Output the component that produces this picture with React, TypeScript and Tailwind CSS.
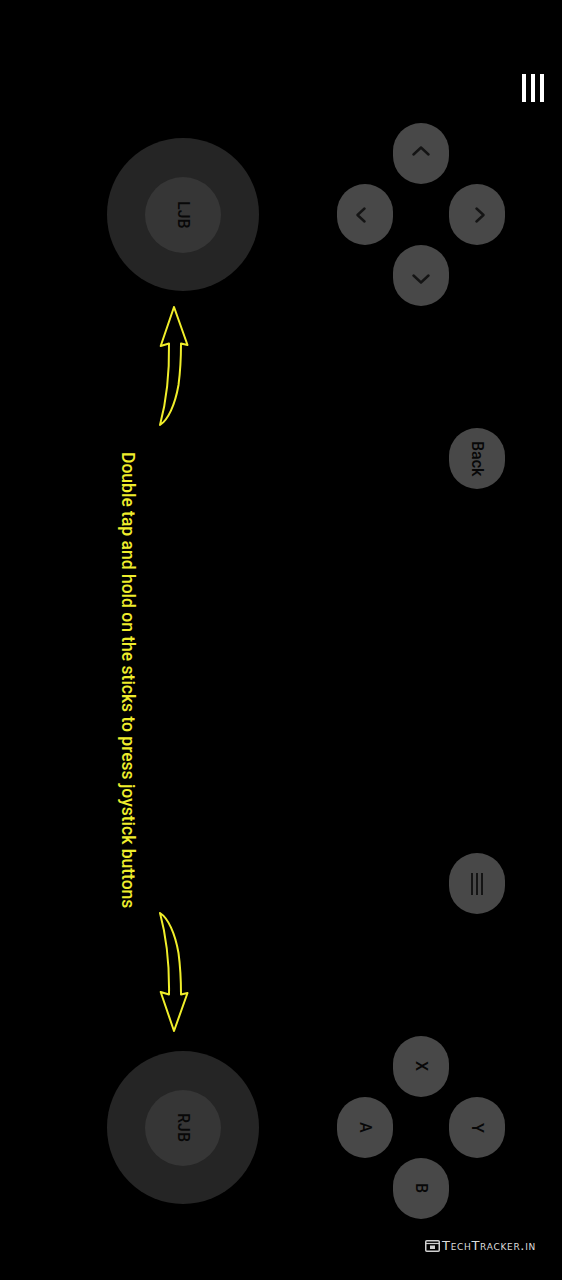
import React from "react";

const V = "[writing-mode:vertical-rl]";

function Btn({ children, className = "" }: { children?: React.ReactNode; className?: string }) {
  return (
    <div className={`w-[56px] h-[61px] rounded-full bg-[#484848] flex items-center justify-center text-[#080808] text-[16px] font-medium ${className}`}>
      {children}
    </div>
  );
}

function Chevron({ dir }: { dir: "up" | "down" | "left" | "right" }) {
  if (dir === "up" || dir === "down") {
    return (
      <svg width="18" height="10" viewBox="0 0 18 10" className={dir === "up" ? "-translate-y-[3px]" : "translate-y-[3px]"}>
        <polyline
          points={dir === "up" ? "1.5,8.5 9,1.5 16.5,8.5" : "1.5,1.5 9,8.5 16.5,1.5"}
          fill="none"
          stroke="#141414"
          strokeWidth="2.4"
          strokeLinecap="round"
          strokeLinejoin="round"
        />
      </svg>
    );
  }
  return (
    <svg width="10" height="16" viewBox="0 0 10 16" className={dir === "left" ? "-translate-x-[4px]" : "translate-x-[3px]"}>
      <polyline
        points={dir === "left" ? "8.5,1.5 1.5,8 8.5,14.5" : "1.5,1.5 8.5,8 1.5,14.5"}
        fill="none"
        stroke="#141414"
        strokeWidth="2.4"
        strokeLinecap="round"
        strokeLinejoin="round"
      />
    </svg>
  );
}

function Stick({ label }: { label: string }) {
  return (
    <div className="w-[152px] h-[153px] rounded-full bg-[#252525] flex items-center justify-center">
      <div className="w-[76px] h-[76px] rounded-full bg-[#363636] flex items-center justify-center">
        <span className={`${V} text-[16px] font-medium text-[#080808]`}>{label}</span>
      </div>
    </div>
  );
}

function Arrow({ flip = false }: { flip?: boolean }) {
  return (
    <svg
      width="34"
      height="124"
      viewBox="0 0 34 124"
      className={`ml-[50px] ${flip ? "-scale-y-100" : ""}`}
    >
      <path
        d="M17 3 L3.7 42 L12 39.5 C 12.5 70, 10 95, 3 121 C 11 116, 18 101, 21.5 81 C 23.5 66, 24 52, 24 39.5 L30.5 41 Z"
        fill="none"
        stroke="#f0ee2a"
        strokeWidth="2"
        strokeLinejoin="round"
      />
    </svg>
  );
}

export default function App() {
  return (
    <div className="relative w-[562px] h-[1280px] bg-black flex overflow-hidden font-['Roboto','Liberation_Sans',sans-serif]">
      {/* Left column: sticks, arrows, hint */}
      <div className="ml-[107px] w-[152px] flex flex-col pt-[138px]">
        <Stick label="LJB" />
        <div className="h-[760px] flex flex-col">
          <div className="mt-[13px]">
            <Arrow />
          </div>
          <div className="mt-[24px] ml-[10px] w-[22px]">
            <span className={`${V} text-[17.5px] leading-[22px] font-medium text-[#efed2c] whitespace-nowrap`}>
              Double tap and hold on the sticks to press joystick buttons
            </span>
          </div>
          <div className="-mt-[5px]">
            <Arrow flip />
          </div>
        </div>
        <Stick label="RJB" />
      </div>

      {/* Right column: dpad, back, menu, face buttons */}
      <div className="ml-[78px] w-[168px] flex flex-col pt-[123px]">
        <div className="grid grid-cols-[56px_56px_56px] grid-rows-[61px_61px_61px]">
          <div />
          <Btn><Chevron dir="up" /></Btn>
          <div />
          <Btn><Chevron dir="left" /></Btn>
          <div />
          <Btn><Chevron dir="right" /></Btn>
          <div />
          <Btn><Chevron dir="down" /></Btn>
          <div />
        </div>

        <Btn className="mt-[122px] ml-[112px]">
          <span className={V}>Back</span>
        </Btn>

        <Btn className="mt-[364px] ml-[112px]">
          <div className="flex gap-[3px]">
            <div className="w-[2px] h-[22px] bg-[#141414]" />
            <div className="w-[2px] h-[22px] bg-[#141414]" />
            <div className="w-[2px] h-[22px] bg-[#141414]" />
          </div>
        </Btn>

        <div className="mt-[122px] grid grid-cols-[56px_56px_56px] grid-rows-[61px_61px_61px]">
          <div />
          <Btn><span className={V}>X</span></Btn>
          <div />
          <Btn><span className={V}>A</span></Btn>
          <div />
          <Btn><span className={V}>Y</span></Btn>
          <div />
          <Btn><span className={V}>B</span></Btn>
          <div />
        </div>
      </div>

      {/* Top-right menu glyph */}
      <div className="ml-[17px] pt-[74px]">
        <div className="flex gap-[5px]">
          <div className="w-[4px] h-[28px] bg-white" />
          <div className="w-[4px] h-[28px] bg-white" />
          <div className="w-[4px] h-[28px] bg-white" />
        </div>
      </div>

      {/* Watermark */}
      <div className="absolute left-[425px] top-[1239px] flex items-center gap-[2px] text-[#dcdcdc]">
        <svg width="15" height="12" viewBox="0 0 15 12">
          <rect x="0.75" y="0.75" width="13.5" height="10.5" rx="1" fill="none" stroke="#d0d0d0" strokeWidth="1.5" />
          <line x1="1" y1="3.5" x2="14" y2="3.5" stroke="#d0d0d0" strokeWidth="1.2" />
          <rect x="5" y="5.5" width="5" height="3.5" fill="#d0d0d0" />
        </svg>
        <span className="text-[13px] leading-none tracking-[0.7px] [font-variant-caps:small-caps] font-['DejaVu_Sans',sans-serif]">
          TechTracker.in
        </span>
      </div>
    </div>
  );
}
